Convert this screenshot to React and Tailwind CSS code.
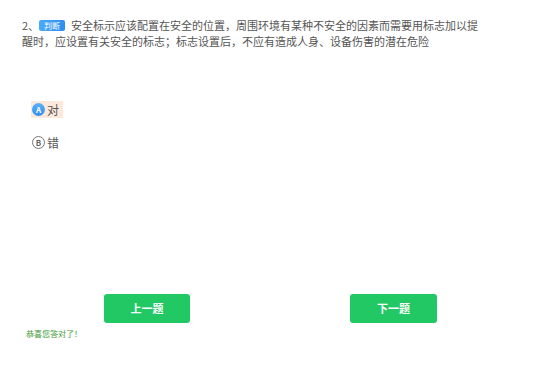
export default function App() {
  return (
    <div className="w-[557px] h-[367px] bg-white font-['Noto_Sans_CJK_SC','Noto_Sans',sans-serif] text-[#555]">
      <div className="pl-[22px] pt-[17px] w-[484px] text-[11px] leading-[16px]">
        <span>2、</span>
        <span className="inline-block align-[1px] px-[5px] h-[11px] leading-[11px] rounded-[2px] bg-gradient-to-r from-[#4aaaf8] to-[#2f8ef0] text-white text-[8px]">
          判断
        </span>
        <span className="ml-[6px]">
          安全标示应该配置在安全的位置，周围环境有某种不安全的因素而需要用标志加以提醒时，应设置有关安全的标志；标志设置后，不应有造成人身、设备伤害的潜在危险
        </span>
      </div>

      <div className="mt-[52px] pl-[31px] flex flex-col gap-[16px] text-[12px] text-[#555]">
        <div className="flex">
          <div className="flex items-center gap-[2px] h-[17px] pl-[1px] pr-[4px] bg-[#fde9dc]">
            <span className="w-[13px] h-[13px] rounded-full bg-gradient-to-b from-[#5ab2fa] to-[#2f8ef0] text-white text-[8px] font-bold flex items-center justify-center">
              A
            </span>
            <span>对</span>
          </div>
        </div>
        <div className="flex">
          <div className="flex items-center gap-[2px] h-[17px] pl-[1px] pr-[4px]">
            <span className="w-[13px] h-[13px] rounded-full border border-[#777] text-[#666] text-[8px] font-bold flex items-center justify-center">
              B
            </span>
            <span>错</span>
          </div>
        </div>
      </div>

      <div className="mt-[143px] flex pl-[104px] gap-[160px]">
        <button className="w-[86px] h-[29px] rounded-[3px] bg-[#21c864] text-white text-[11px] font-bold">
          上一题
        </button>
        <button className="w-[87px] h-[29px] rounded-[3px] bg-[#21c864] text-white text-[11px] font-bold">
          下一题
        </button>
      </div>

      <div className="pl-[26px] mt-[5px] text-[8px] leading-[12px] text-[#3d9a35]">
        恭喜您答对了！
      </div>
    </div>
  );
}
